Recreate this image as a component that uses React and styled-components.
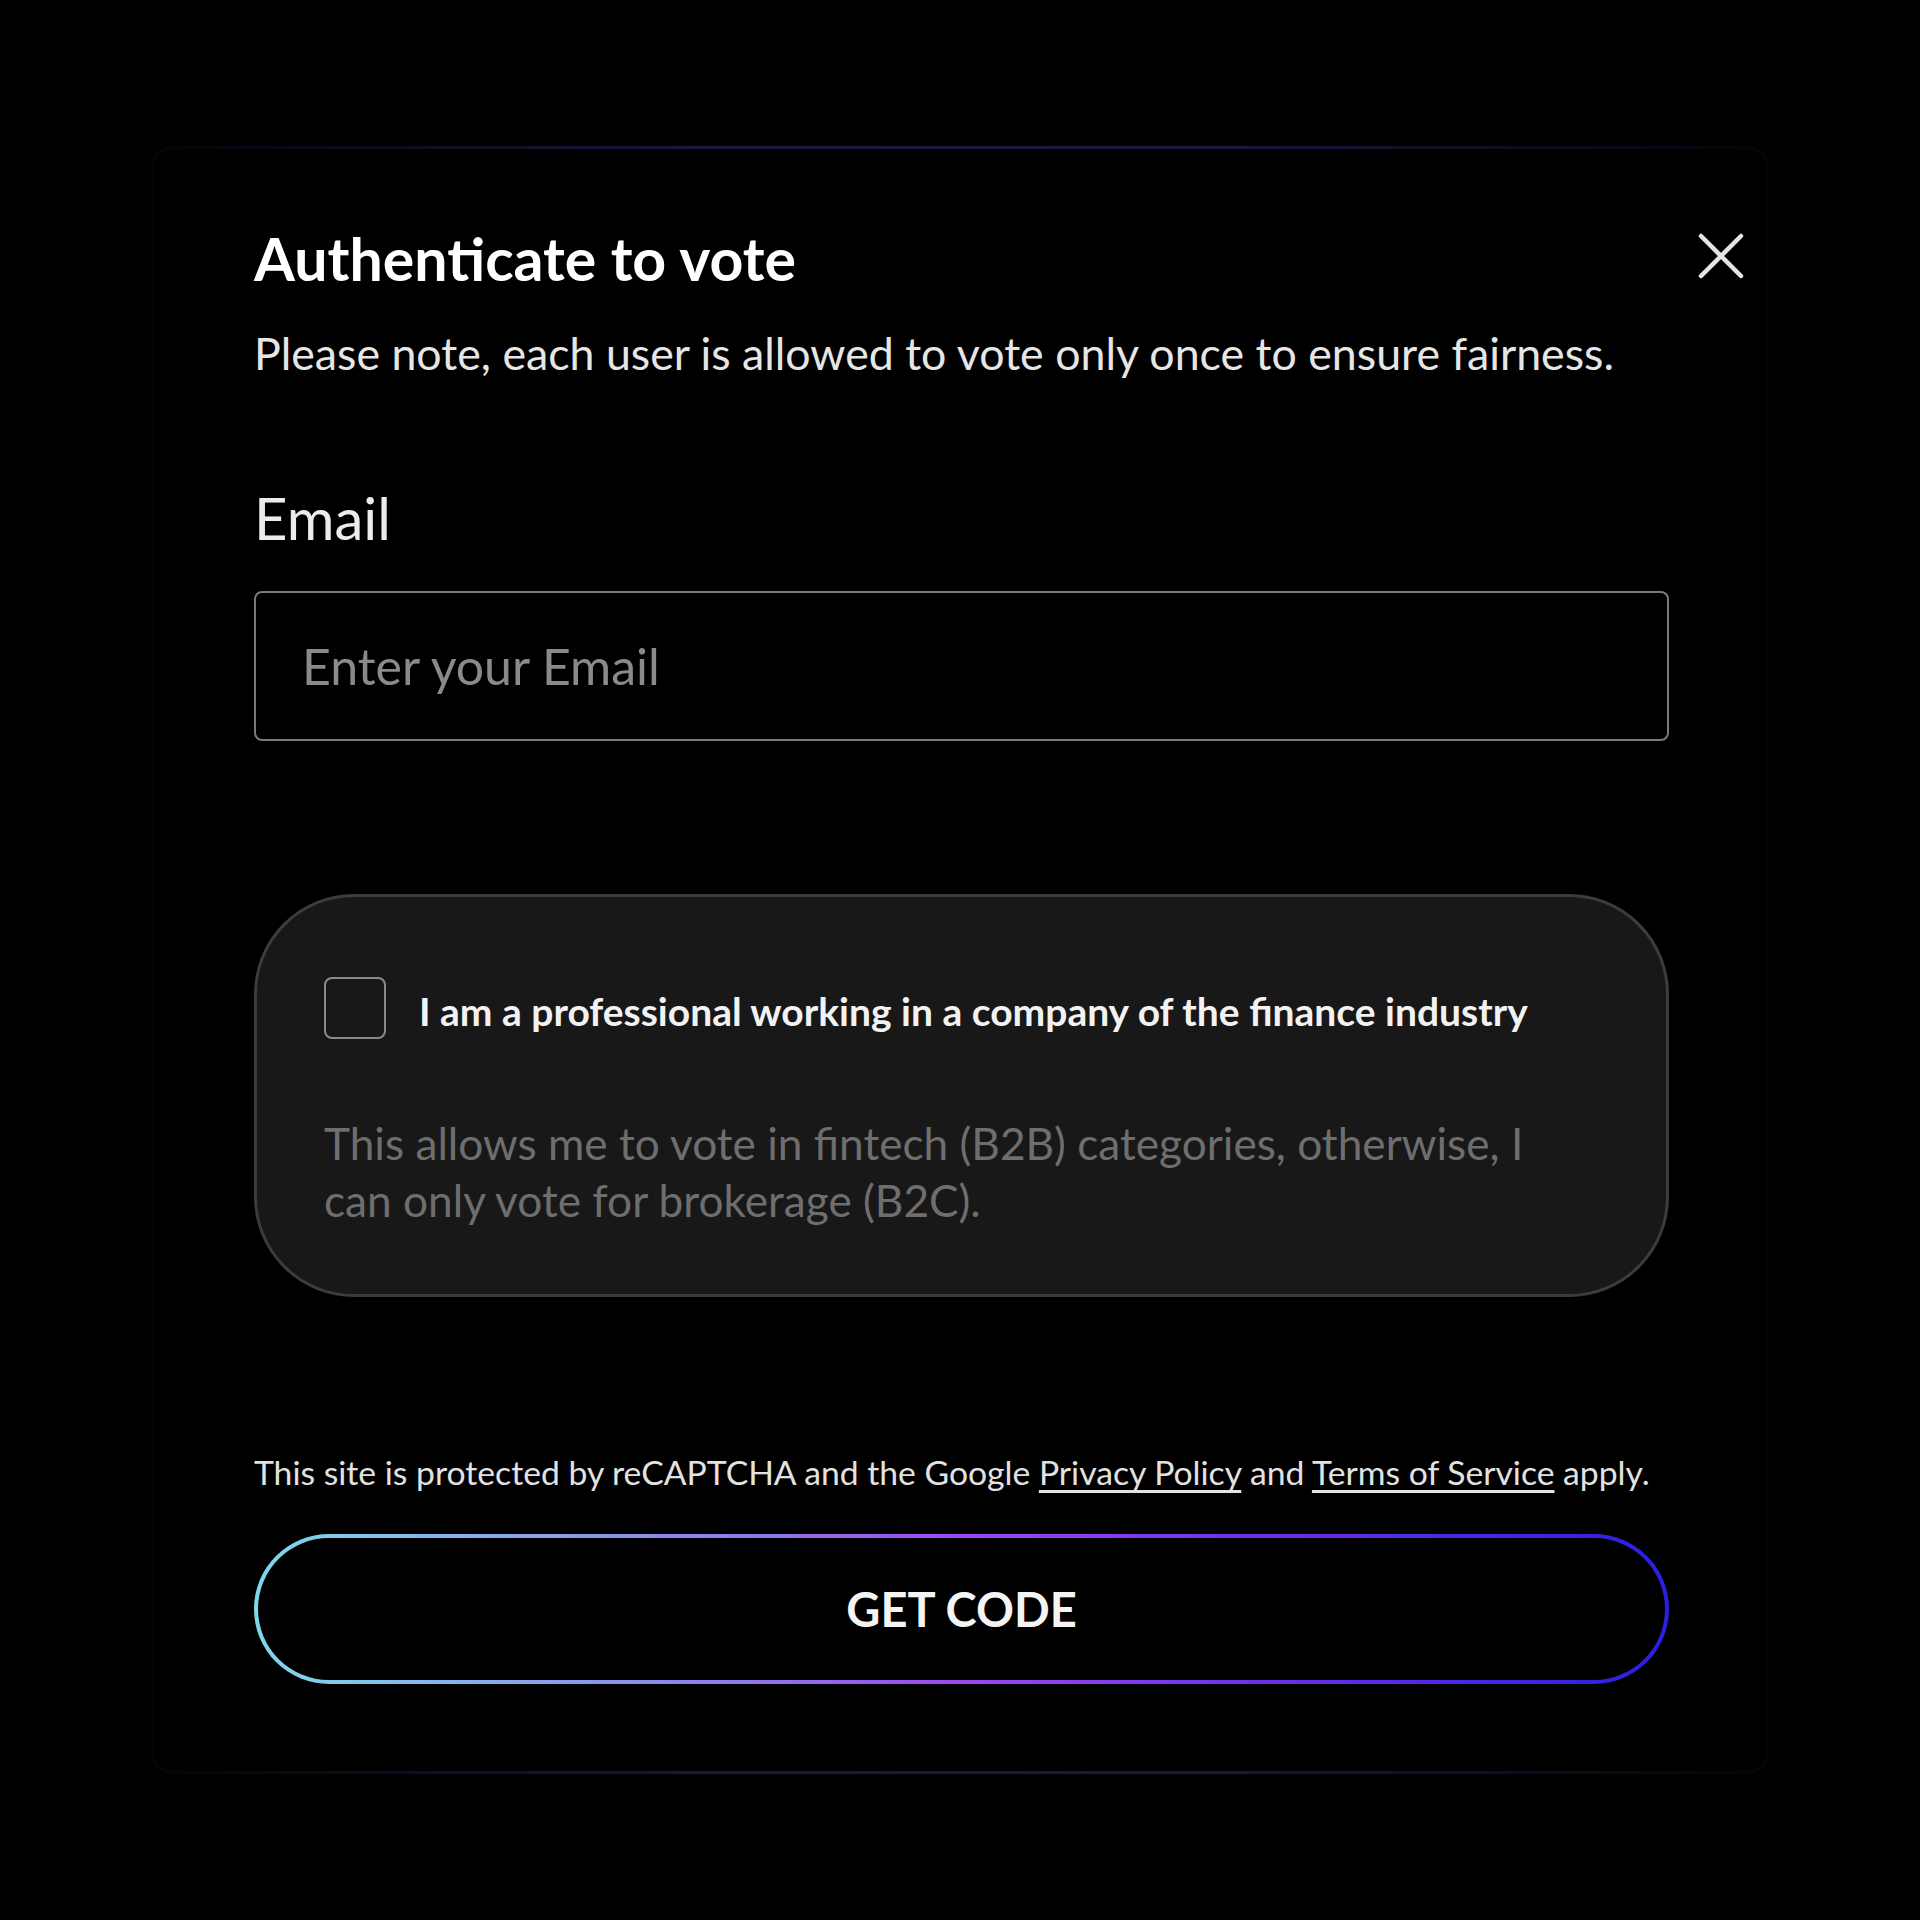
import React, { useState } from "react";
import styled, { createGlobalStyle } from "styled-components";

const GlobalStyle = createGlobalStyle`
  html, body {
    margin: 0;
    padding: 0;
    background: #000;
  }
  body {
    font-family: Lato, "Open Sans", sans-serif;
    color: #fff;
  }
`;

const Page = styled.div`
  min-height: 1920px;
  display: flex;
  align-items: center;
  justify-content: center;
  background: #000;
`;

const Modal = styled.div`
  position: relative;
  box-sizing: border-box;
  width: 1618px;
  padding: 75px 97px 87px 100px;
  border: 3px solid transparent;
  border-radius: 20px;
  background: linear-gradient(#000, #000) padding-box,
    linear-gradient(90deg, #040308 0%, #1a1538 30%, #1d1740 50%, #1a1538 70%, #040308 100%) border-box;
  display: flex;
  flex-direction: column;
`;

const CloseButton = styled.button`
  position: absolute;
  top: 84px;
  right: 22px;
  width: 46px;
  height: 46px;
  padding: 0;
  border: none;
  background: none;
  cursor: pointer;
  color: #e4e4e4;
`;

const Title = styled.h2`
  margin: 0;
  font-size: 59px;
  line-height: 1.2;
  font-weight: 700;
  color: #fff;
`;

const Subtitle = styled.p`
  margin: 32px 0 0;
  font-size: 44.7px;
  line-height: 1.2;
  color: #e6e6e6;
`;

const Label = styled.label`
  margin-top: 102px;
  font-size: 58px;
  line-height: 1.2;
  color: #ececec;
`;

const Input = styled.input`
  box-sizing: border-box;
  margin-top: 39px;
  width: 100%;
  height: 150px;
  padding: 0 46px;
  border: 2px solid #7a7a7a;
  border-radius: 8px;
  background: #000;
  color: #fff;
  font-family: Lato, "Open Sans", sans-serif;
  font-size: 50px;
  outline: none;

  &::placeholder {
    color: #8a8a8a;
  }
`;

const Card = styled.div`
  box-sizing: border-box;
  margin-top: 153px;
  padding: 80px 100px 66px 67px;
  border: 3px solid #3c3c3c;
  border-radius: 100px;
  background: #181818;
`;

const CheckRow = styled.label`
  display: flex;
  align-items: flex-start;
  gap: 33px;
  cursor: pointer;
`;

const CheckBox = styled.span`
  flex: none;
  box-sizing: border-box;
  width: 62px;
  height: 62px;
  border: 2px solid #8a8a8a;
  border-radius: 8px;
  background: ${({ checked }) => (checked ? "#8b5cf6" : "transparent")};
`;

const CheckText = styled.span`
  margin-top: 11px;
  font-size: 39px;
  line-height: 1.2;
  font-weight: 700;
  color: #f2f2f2;
  white-space: nowrap;
`;

const Description = styled.p`
  margin: 75px 0 0;
  font-size: 44.2px;
  line-height: 57px;
  color: #6e6e6e;
`;

const Notice = styled.p`
  margin: 155px 0 0;
  font-size: 33.7px;
  line-height: 1.2;
  color: #e2e2e2;
  white-space: nowrap;

  a {
    color: #e2e2e2;
    text-decoration: underline;
    text-underline-offset: 5px;
  }
`;

const CodeButton = styled.button`
  box-sizing: border-box;
  margin-top: 41px;
  width: 100%;
  height: 150px;
  border: 4px solid transparent;
  border-radius: 75px;
  background: linear-gradient(#000, #000) padding-box,
    linear-gradient(90deg, #7fd8ec 0%, #8d86ea 30%, #9b48f0 50%, #6a2fea 72%, #2a1fe0 100%) border-box;
  color: #f4f4f4;
  font-family: Lato, "Open Sans", sans-serif;
  font-size: 47px;
  font-weight: 700;
  cursor: pointer;
`;

export default function App() {
  const [checked, setChecked] = useState(false);

  return (
    <>
      <GlobalStyle />
      <Page>
        <Modal>
          <CloseButton aria-label="Close">
            <svg width="46" height="46" viewBox="0 0 46 46">
              <path
                d="M3 3 L43 43 M43 3 L3 43"
                stroke="currentColor"
                strokeWidth="4.5"
                strokeLinecap="round"
              />
            </svg>
          </CloseButton>

          <Title>Authenticate to vote</Title>
          <Subtitle>
            Please note, each user is allowed to vote only once to ensure fairness.
          </Subtitle>

          <Label htmlFor="email">Email</Label>
          <Input id="email" type="email" placeholder="Enter your Email" />

          <Card>
            <CheckRow onClick={() => setChecked(!checked)}>
              <CheckBox checked={checked} />
              <CheckText>
                I am a professional working in a company of the finance industry
              </CheckText>
            </CheckRow>
            <Description>
              This allows me to vote in fintech (B2B) categories, otherwise, I can
              only vote for brokerage (B2C).
            </Description>
          </Card>

          <Notice>
            This site is protected by reCAPTCHA and the Google{" "}
            <a href="#privacy">Privacy Policy</a> and{" "}
            <a href="#terms">Terms of Service</a> apply.
          </Notice>

          <CodeButton>GET CODE</CodeButton>
        </Modal>
      </Page>
    </>
  );
}
